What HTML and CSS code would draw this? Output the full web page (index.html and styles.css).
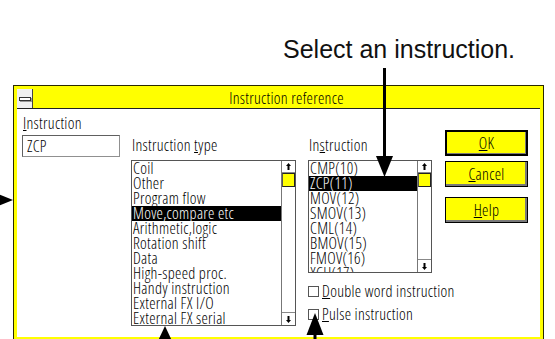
FILE: index.html
```html
<!DOCTYPE html>
<html>
<head>
<meta charset="utf-8">
<title>Instruction reference</title>
<link rel="stylesheet" href="styles.css">
</head>
<body>
<div class="caption">Select an instruction.</div>
<div class="window">
  <div class="titlebar">
    <div class="sysmenu"><span class="sysdash"></span></div>
    <div class="title">Instruction reference</div>
  </div>
  <div class="client">
    <div class="col col-name">
      <div class="label"><u>I</u>nstruction</div>
      <div class="textbox">ZCP</div>
    </div>
    <div class="col col-type">
      <div class="label">Instruction <u>t</u>ype</div>
      <div class="listbox list-type">
        <ul class="items">
          <li>Coil</li>
          <li>Other</li>
          <li>Program flow</li>
          <li class="sel">Move,compare etc</li>
          <li>Arithmetic,logic</li>
          <li>Rotation shift</li>
          <li>Data</li>
          <li>High-speed proc.</li>
          <li>Handy instruction</li>
          <li>External FX I/O</li>
          <li>External FX serial</li>
        </ul>
        <div class="scrollbar">
          <div class="sb-btn sb-up"><svg width="5" height="7" viewBox="0 0 5 7"><polygon points="2.5,0 5,3 0,3" fill="#000"/><rect x="1.5" y="3" width="2" height="4" fill="#000"/></svg></div>
          <div class="sb-thumb"></div>
          <div class="sb-track"></div>
          <div class="sb-btn sb-down"><svg width="5" height="7" viewBox="0 0 5 7"><rect x="1.5" y="0" width="2" height="4" fill="#000"/><polygon points="0,4 5,4 2.5,7" fill="#000"/></svg></div>
        </div>
      </div>
    </div>
    <div class="col col-instr">
      <div class="label">In<u>s</u>truction</div>
      <div class="listbox list-instr">
        <ul class="items">
          <li>CMP(10)</li>
          <li class="sel">ZCP(11)</li>
          <li>MOV(12)</li>
          <li>SMOV(13)</li>
          <li>CML(14)</li>
          <li>BMOV(15)</li>
          <li>FMOV(16)</li>
          <li>XCH(17)</li>
        </ul>
        <div class="scrollbar">
          <div class="sb-btn sb-up"><svg width="5" height="7" viewBox="0 0 5 7"><polygon points="2.5,0 5,3 0,3" fill="#000"/><rect x="1.5" y="3" width="2" height="4" fill="#000"/></svg></div>
          <div class="sb-thumb"></div>
          <div class="sb-track"></div>
          <div class="sb-btn sb-down"><svg width="5" height="7" viewBox="0 0 5 7"><rect x="1.5" y="0" width="2" height="4" fill="#000"/><polygon points="0,4 5,4 2.5,7" fill="#000"/></svg></div>
        </div>
      </div>
      <div class="check check-first"><span class="box"></span><span><u>D</u>ouble word instruction</span></div>
      <div class="check check-second"><span class="box"></span><span><u>P</u>ulse instruction</span></div>
    </div>
    <div class="col col-buttons">
      <div class="btn btn-default"><span><u>O</u>K</span></div>
      <div class="btn btn-cancel"><span><u>C</u>ancel</span></div>
      <div class="btn btn-help"><span><u>H</u>elp</span></div>
    </div>
  </div>
</div>
<svg class="annotations" width="555" height="339" viewBox="0 0 555 339">
  <rect x="383" y="68" width="3" height="91" fill="#000"/>
  <polygon points="376,156 393,156 384.5,177" fill="#000"/>
  <polygon points="-9,191 -9,209 13,200" fill="#000"/>
  <polygon points="165,326 156.5,344 173.5,344" fill="#000"/>
  <polygon points="315,313 306.5,335 323.5,335" fill="#000"/>
  <rect x="313.5" y="334" width="3" height="6" fill="#000"/>
</svg>
</body>
</html>
```
FILE: styles.css
```css
* {
  box-sizing: border-box;
}

html,
body {
  margin: 0;
  padding: 0;
}

body {
  width: 555px;
  height: 339px;
  overflow: hidden;
  position: relative;
  background: #ffffff;
  font-family: "Liberation Sans", Arial, sans-serif;
}

.caption {
  height: 62px;
  padding: 37px 0 0 283px;
  font-size: 25px;
  line-height: 25px;
  color: #111;
  white-space: nowrap;
}

.window {
  margin: 23px 0 0 13px;
  width: 531px;
  border: 1px solid #2a2a00;
  background: #ffff00;
  padding: 3px;
  font-family: "Open Sans", "DejaVu Sans Condensed", sans-serif;
  font-stretch: 75%;
  font-weight: 300;
  font-size: 16px;
  letter-spacing: 0.3px;
  line-height: 15px;
  color: #000;
}

.titlebar {
  display: flex;
  height: 20px;
  border-bottom: 1px solid #222;
}

.sysmenu {
  width: 16px;
  background: #f0f0f0;
  border-right: 1px solid #444;
  display: flex;
  align-items: center;
  justify-content: center;
}

.sysdash {
  width: 12px;
  height: 4px;
  border: 1px solid #333;
  background: #fff;
  box-shadow: 1px 1px 0 #999;
}

.title {
  flex: 1;
  text-align: center;
  line-height: 19px;
  white-space: nowrap;
}

.client {
  background: #ffffff;
  height: 228px;
  display: flex;
  align-items: flex-start;
}

.col {
  display: flex;
  flex-direction: column;
}

.col-name {
  margin-left: 5px;
  padding-top: 7px;
  width: 98px;
}

.col-type {
  margin-left: 11px;
  padding-top: 29px;
  width: 165px;
}

.col-instr {
  margin-left: 12px;
  padding-top: 29px;
  width: 124px;
}

.col-buttons {
  margin-left: 13px;
  padding-top: 21px;
  width: 83px;
}

.label {
  height: 15px;
  padding-left: 1px;
  white-space: nowrap;
}

.textbox {
  margin-top: 4px;
  height: 22px;
  border: 1px solid #909090;
  border-top-color: #606060;
  border-left-color: #606060;
  padding-left: 4px;
  line-height: 20px;
}

.listbox {
  margin-top: 7px;
  display: flex;
  border: 1px solid #555;
  background: #fff;
}

.list-type {
  height: 166px;
}

.list-instr {
  height: 113px;
}

.items {
  list-style: none;
  margin: 0;
  padding: 0;
  flex: 1;
  overflow: hidden;
}

.items li {
  height: 15px;
  line-height: 15px;
  padding-left: 1px;
  white-space: nowrap;
}

.items li.sel {
  background: #000;
  color: #fff;
}

.scrollbar {
  width: 14px;
  border-left: 1px solid #777;
  display: flex;
  flex-direction: column;
}

.sb-btn {
  height: 12px;
  display: flex;
  align-items: center;
  justify-content: center;
  background: #fff;
}

.sb-up {
  border-bottom: 1px solid #888;
}

.sb-down {
  height: 13px;
  border-top: 1px solid #888;
}

.sb-thumb {
  height: 14px;
  background: #ffff00;
  border: 1px solid #222;
  border-left-color: #555;
}

.sb-track {
  flex: 1;
}

.check {
  display: flex;
  align-items: center;
  height: 15px;
  white-space: nowrap;
}

.check-first {
  margin-top: 11px;
}

.check-second {
  margin-top: 8px;
}

.box {
  width: 11px;
  height: 11px;
  border: 1px solid #555;
  background: #fff;
  margin-right: 3px;
  flex: none;
}

.btn {
  height: 26px;
  display: flex;
  align-items: center;
  justify-content: center;
  background: #ffff00;
  border: 1px solid #000;
  box-shadow: inset -2px -2px 0 #7a7a7a;
}

.btn-default {
  border: 2px solid #000;
  box-shadow: inset -1px -1px 0 #7a7a7a;
}

.btn-cancel {
  margin-top: 5px;
}

.btn-help {
  margin-top: 10px;
}

.annotations {
  position: absolute;
  left: 0;
  top: 0;
  pointer-events: none;
}
```
